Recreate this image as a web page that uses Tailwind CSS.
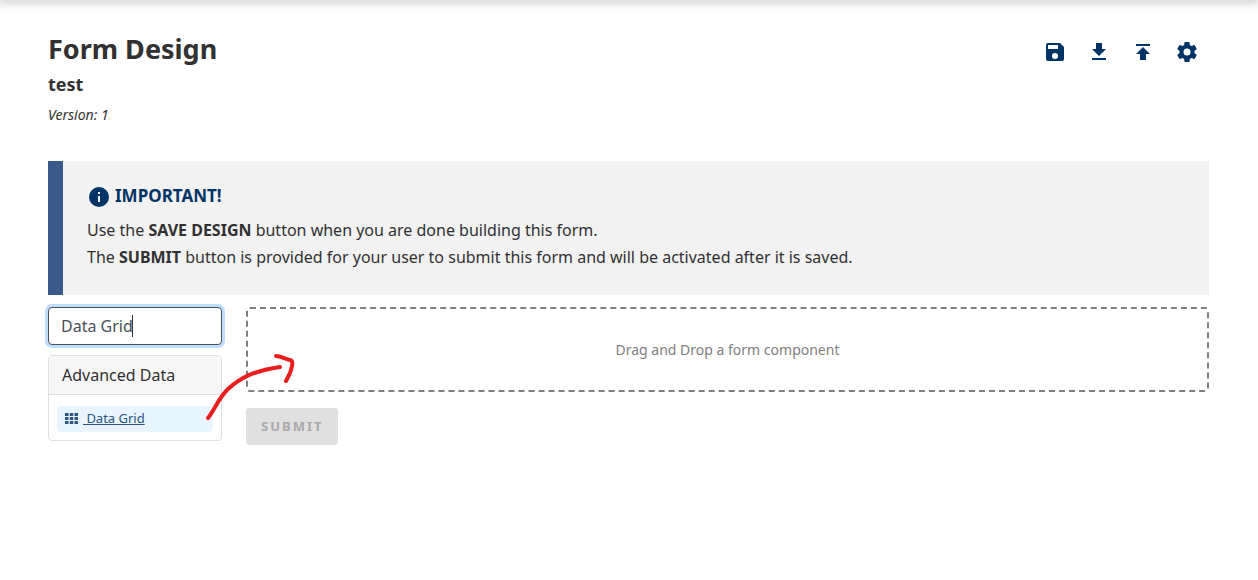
<!DOCTYPE html>
<html lang="en">
<head>
<meta charset="utf-8">
<meta name="viewport" content="width=device-width, initial-scale=1">
<title>Form Design</title>
<script src="https://cdn.jsdelivr.net/npm/@tailwindcss/browser@4"></script>
</head>
<body class="min-h-screen overflow-x-hidden bg-white font-['Noto_Sans',sans-serif] text-[#313132]">
<div class="h-0 shadow-[0_0_8px_2px_rgba(0,0,0,0.35)]"></div>
<main class="pt-[31px] pr-[49px] pl-12">
  <header class="flex items-start justify-between">
    <div>
      <h1 class="text-[27px] leading-9 font-bold">Form Design</h1>
      <h2 class="mt-[5px] text-lg leading-6 font-bold">test</h2>
      <p class="mt-[7px] text-sm leading-6 italic">Version: 1</p>
    </div>
    <div class="flex gap-5 pt-[9px] pr-2.5 text-[#003366]">
      <button type="button" aria-label="Save design" class="size-6"><svg viewBox="0 0 24 24" class="size-6 fill-current"><path d="M15 9H5V5h10m-3 14a3 3 0 0 1-3-3 3 3 0 0 1 3-3 3 3 0 0 1 3 3 3 3 0 0 1-3 3m5-16H5a2 2 0 0 0-2 2v14a2 2 0 0 0 2 2h14a2 2 0 0 0 2-2V7l-4-4z"/></svg></button>
      <button type="button" aria-label="Export design" class="size-6"><svg viewBox="0 0 24 24" class="size-6 fill-current"><path d="M5 20h14v-2H5m14-9h-4V3H9v6H5l7 7 7-7z"/></svg></button>
      <button type="button" aria-label="Import design" class="size-6"><svg viewBox="0 0 24 24" class="size-6 fill-current"><path d="M5 4v2h14V4H5m0 10h4v6h6v-6h4l-7-7-7 7z"/></svg></button>
      <button type="button" aria-label="Manage form" class="size-6"><svg viewBox="0 0 24 24" class="size-6 fill-current"><path d="M12 15.5A3.5 3.5 0 0 1 8.500 12 3.500 3.500 0 0 1 12 8.500a3.500 3.500 0 0 1 3.500 3.500 3.500 3.500 0 0 1-3.500 3.500m7.430-2.530c.04-.32.07-.64.07-.97s-.03-.66-.07-1l2.110-1.630c.19-.15.24-.42.12-.64l-2-3.460c-.12-.22-.39-.31-.61-.22l-2.490 1c-.52-.39-1.060-.73-1.690-.98l-.37-2.650A.506.506 0 0 0 14 2h-4c-.25 0-.46.18-.5.42l-.37 2.650c-.63.25-1.170.59-1.690.98l-2.490-1c-.22-.09-.49 0-.61.22l-2 3.460c-.13.22-.07.49.12.64L4.570 11c-.04.34-.07.67-.07 1s.03.65.07.97l-2.110 1.660c-.19.15-.25.42-.12.64l2 3.460c.12.22.39.3.61.22l2.490-1.010c.52.4 1.060.74 1.690.99l.37 2.650c.04.24.25.42.5.42h4c.25 0 .46-.18.5-.42l.37-2.650c.63-.26 1.170-.59 1.690-.99l2.490 1.010c.22.08.49 0 .61-.22l2-3.460c.12-.22.07-.49-.12-.64l-2.110-1.660z"/></svg></button>
    </div>
  </header>

  <section class="mt-[34px] border-l-[15px] border-[#38598a] bg-[#f2f2f2] px-6 pt-[21px] pb-6">
    <h3 class="flex items-center gap-1 text-[17px] leading-7 font-bold text-[#003366]">
      <svg viewBox="0 0 24 24" class="mt-px size-6 fill-current" aria-hidden="true"><path d="M13 9h-2V7h2m0 10h-2v-6h2m-1-9A10 10 0 0 0 2 12a10 10 0 0 0 10 10 10 10 0 0 0 10-10A10 10 0 0 0 12 2z"/></svg>
      IMPORTANT!
    </h3>
    <p class="mt-[7px] leading-[27px]">Use the <strong>SAVE DESIGN</strong> button when you are done building this form.<br>The <strong>SUBMIT</strong> button is provided for your user to submit this form and will be activated after it is saved.</p>
  </section>

  <div class="mt-3 flex items-start gap-6">
    <aside class="relative w-[174px] shrink-0">
      <input type="search" aria-label="Search field(s)" value="Data Grid" class="block h-[38px] w-full appearance-none rounded border border-[#495057] bg-white px-3 text-base text-[#495057] caret-transparent shadow-[0_0_0_3px_#bfdeff] outline-none">
      <span class="absolute top-2 left-[84px] h-[22px] w-px bg-[#313132]" aria-hidden="true"></span>
      <div class="mt-2.5 overflow-hidden rounded border border-[#dfdfdf]">
        <h4 class="border-b border-[#dfdfdf] bg-[#f7f7f7] px-[13px] py-1.5 leading-[26px]">Advanced Data</h4>
        <div class="px-2 pt-[11px] pb-2">
          <a href="#" class="flex h-[26px] items-center gap-[5px] rounded bg-[#e8f4ff] px-2 text-[13px] text-[#2f5480]">
            <svg viewBox="0 0 13 11" class="mb-0.5 h-[11px] w-[13px] shrink-0 fill-current" aria-hidden="true"><path d="M0 0h3.500v3H0zM4.750 0h3.500v3h-3.500zM9.500 0H13v3H9.500zM0 4h3.500v3H0zM4.750 4h3.500v3h-3.500zM9.500 4H13v3H9.500zM0 8h3.500v3H0zM4.750 8h3.500v3h-3.500zM9.500 8H13v3H9.500z"/></svg>
            <span class="whitespace-pre underline"> Data Grid</span>
          </a>
        </div>
      </div>
      <svg viewBox="0 0 96 76" class="pointer-events-none absolute top-[42px] left-[155px] h-[76px] w-24 fill-none stroke-[#e81e1e] stroke-4" stroke-linecap="round" stroke-linejoin="round" aria-hidden="true"><path d="M5 69C12 60 15 50 25 40 37 29 50 22 77 18M73 7C78 7 82 10 87 11 91 12 89 18 87 24L83 32"/></svg>
    </aside>
    <div class="min-w-0 flex-1">
      <div class="flex h-[85px] items-center justify-center rounded border-2 border-dashed border-[#808080] text-sm text-[#808080]">Drag and Drop a form component</div>
      <button type="button" disabled class="mt-4 h-[37px] rounded-[3px] bg-[#e0e0e0] px-[15px] pt-px text-[13px] font-bold tracking-[2px] text-[#a9a9a9]">SUBMIT</button>
    </div>
  </div>
</main>
</body>
</html>
